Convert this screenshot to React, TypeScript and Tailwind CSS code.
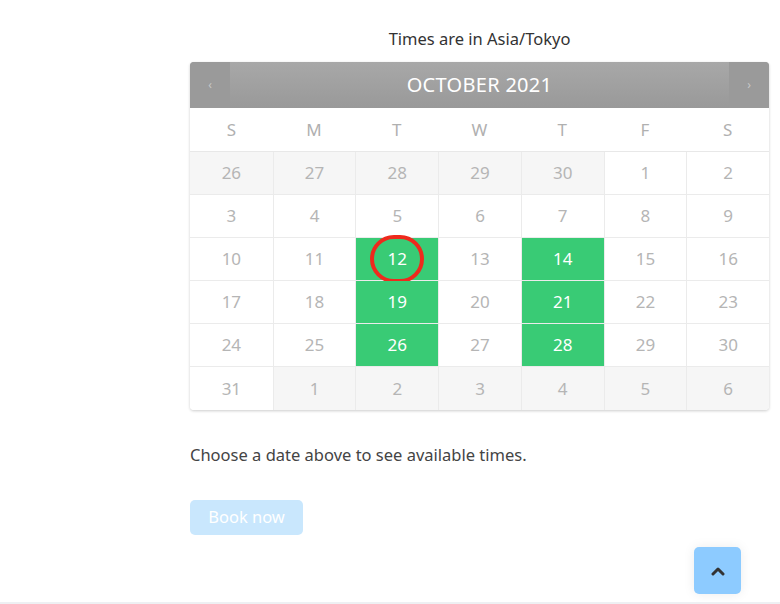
const weeks: { d: number; muted?: boolean; open?: boolean }[][] = [
  [{ d: 26, muted: true }, { d: 27, muted: true }, { d: 28, muted: true }, { d: 29, muted: true }, { d: 30, muted: true }, { d: 1 }, { d: 2 }],
  [{ d: 3 }, { d: 4 }, { d: 5 }, { d: 6 }, { d: 7 }, { d: 8 }, { d: 9 }],
  [{ d: 10 }, { d: 11 }, { d: 12, open: true }, { d: 13 }, { d: 14, open: true }, { d: 15 }, { d: 16 }],
  [{ d: 17 }, { d: 18 }, { d: 19, open: true }, { d: 20 }, { d: 21, open: true }, { d: 22 }, { d: 23 }],
  [{ d: 24 }, { d: 25 }, { d: 26, open: true }, { d: 27 }, { d: 28, open: true }, { d: 29 }, { d: 30 }],
  [{ d: 31 }, { d: 1, muted: true }, { d: 2, muted: true }, { d: 3, muted: true }, { d: 4, muted: true }, { d: 5, muted: true }, { d: 6, muted: true }],
];

const dayNames = ['S', 'M', 'T', 'W', 'T', 'F', 'S'];

export default function App() {
  return (
    <div className="relative w-[780px] h-[604px] bg-white overflow-hidden font-['Noto_Sans',sans-serif]">
      <div className="ml-[190px] w-[579px] pt-[28px]">
        <p className="text-center text-[16.5px] leading-[22px] text-[#333] mb-[12px]">Times are in Asia/Tokyo</p>

        <div className="rounded-[4px] shadow-[0_1px_3px_rgba(0,0,0,0.2)] overflow-hidden">
          <div className="flex h-[46px] bg-gradient-to-b from-[#a8a8a8] to-[#999] text-white">
            <button className="w-[40px] bg-[#9a9a9a] text-[#c8c8c8] text-[12px]">‹</button>
            <div className="flex-1 flex items-center justify-center text-[20px] tracking-[0.3px]">OCTOBER 2021</div>
            <button className="w-[40px] bg-[#9a9a9a] text-[#c8c8c8] text-[12px]">›</button>
          </div>

          <div className="grid grid-cols-7 h-[44px] border-b border-[#e8e8e8]">
            {dayNames.map((n, i) => (
              <div key={i} className="flex items-center justify-center text-[17px] text-[#b0b0b0]">{n}</div>
            ))}
          </div>

          {weeks.map((w, wi) => (
            <div key={wi} className="grid grid-cols-7 h-[43px] border-b border-[#ebebeb] last:border-b-0">
              {w.map((c, ci) => (
                <div
                  key={ci}
                  className={
                    'relative flex items-center justify-center text-[17px] border-l border-[#ebebeb] first:border-l-0 ' +
                    (c.open
                      ? 'bg-[#39cb75] text-white'
                      : c.muted
                        ? 'bg-[#f6f6f6] text-[#b5b5b5]'
                        : 'bg-white text-[#b5b5b5]')
                  }
                >
                  {c.d}
                  {wi === 2 && ci === 2 && (
                    <span className="absolute left-1/2 top-1/2 -translate-x-1/2 -translate-y-1/2 w-[54px] h-[48px] rounded-full border-[4px] border-[#ee2a1d]" />
                  )}
                </div>
              ))}
            </div>
          ))}
        </div>

        <p className="mt-[34px] text-[16.5px] leading-[22px] text-[#444]">Choose a date above to see available times.</p>

        <button className="mt-[34px] w-[113px] h-[35px] rounded-[5px] bg-[#c9e7fd] text-white text-[16.5px]">Book now</button>
      </div>

      <button className="absolute left-[694px] top-[547px] w-[47px] h-[47px] rounded-[5px] bg-[#8dcbff] shadow-[0_0_12px_rgba(0,0,0,0.08)] flex items-center justify-center">
        <svg width="14" height="10" viewBox="0 0 14 10" fill="none">
          <path d="M2 8 L7 3 L12 8" stroke="#333" strokeWidth="3" strokeLinecap="round" strokeLinejoin="round" />
        </svg>
      </button>

      <div className="absolute left-0 right-0 bottom-0 h-[2px] bg-[#eef0f3]" />
    </div>
  );
}
